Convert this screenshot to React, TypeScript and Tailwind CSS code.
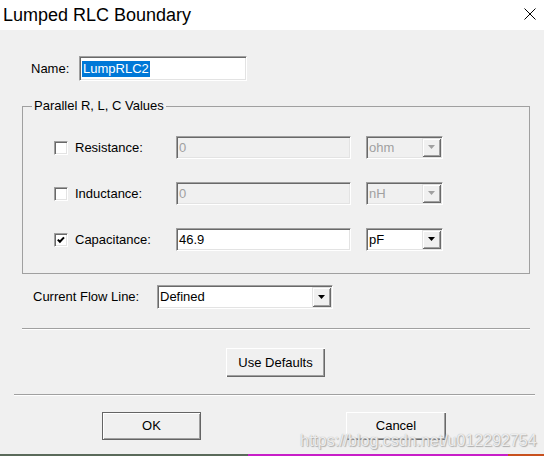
import React from "react";

const font = { fontFamily: '"Liberation Sans", Arial, sans-serif' };

const sunken =
  "border border-t-[#a0a0a0] border-l-[#a0a0a0] border-r-white border-b-white shadow-[inset_1px_1px_0_#696969,inset_-1px_-1px_0_#e3e3e3]";

function Arrow({ disabled }: { disabled?: boolean }) {
  return (
    <div className="w-[19px] h-full bg-[#f0f0f0] shadow-[inset_1px_1px_0_#e3e3e3,inset_-1px_-1px_0_#696969,inset_2px_2px_0_#fff,inset_-2px_-2px_0_#a0a0a0] flex items-center justify-center shrink-0">
      <svg width="8" height="5" viewBox="0 0 8 5">
        <path d="M0 0H7L3.5 4Z" fill={disabled ? "#a0a0a0" : "#000"} />
      </svg>
    </div>
  );
}

function Combo({ text, disabled, w }: { text: string; disabled?: boolean; w: string }) {
  return (
    <div className={`${w} ${sunken} ${disabled ? "bg-[#f0f0f0]" : "bg-white"} flex items-stretch p-[1px]`}>
      <div className={`flex-1 pl-[1px] text-[13px] leading-[20px] ${disabled ? "text-[#a0a0a0]" : "text-black"}`}>
        {text}
      </div>
      <Arrow disabled={disabled} />
    </div>
  );
}

function Check({ checked }: { checked?: boolean }) {
  return (
    <div className="w-[14px] h-[14px] bg-white border border-t-[#a0a0a0] border-l-[#a0a0a0] border-r-white border-b-white shadow-[inset_1px_1px_0_#696969,inset_-1px_-1px_0_#e3e3e3] flex items-center justify-center shrink-0">
      {checked && (
        <svg width="8" height="8" viewBox="0 0 8 8">
          <path d="M0.8 3.6L2.9 5.8L7 1.4" stroke="#000" strokeWidth="2" fill="none" />
        </svg>
      )}
    </div>
  );
}

function Row({ label, value, unit, checked }: { label: string; value: string; unit: string; checked?: boolean }) {
  const disabled = !checked;
  return (
    <div className="flex items-center h-[23px]">
      <Check checked={checked} />
      <div className="ml-[7px] w-[101px] text-[13px] text-black">{label}</div>
      <div className={`w-[175px] h-[23px] ${sunken} ${disabled ? "bg-[#f0f0f0] text-[#a0a0a0]" : "bg-white text-black"} pl-[2px] text-[13px] leading-[21px]`}>
        {value}
      </div>
      <div className="ml-[15px] flex">
        <Combo text={unit} disabled={disabled} w="w-[77px] h-[23px]" />
      </div>
    </div>
  );
}

function Button({ label, def, w }: { label: string; def?: boolean; w: string }) {
  return (
    <div
      className={`${w} flex items-center justify-center text-[13px] text-black bg-[#f0f0f0] ${
        def
          ? "border border-[#646464] shadow-[inset_1px_1px_0_#fff,inset_-1px_-1px_0_#a0a0a0]"
          : "shadow-[inset_1px_1px_0_#fff,inset_-1px_-1px_0_#696969,inset_-2px_-2px_0_#a0a0a0]"
      }`}
    >
      {label}
    </div>
  );
}

export default function App() {
  return (
    <div className="w-[544px] h-[456px] flex flex-col bg-[#f0f0f0] relative overflow-hidden" style={font}>
      <div className="h-[30px] bg-white flex items-center justify-between shrink-0">
        <div className="pl-[3px] text-[18px] text-black">Lumped RLC Boundary</div>
        <svg width="12" height="12" viewBox="0 0 12 12" className="mr-[8px] mb-[3px]">
          <path d="M0.5 0.5L11.5 11.5M11.5 0.5L0.5 11.5" stroke="#000" strokeWidth="1" />
        </svg>
      </div>

      <div className="flex-1 flex flex-col">
        <div className="flex items-center mt-[26px] h-[25px] pl-[31px]">
          <div className="w-[48px] shrink-0 text-[13px] text-black">Name:</div>
          <div className={`w-[168px] h-[25px] shrink-0 bg-white ${sunken} pl-[2px] flex items-center`}>
            <span className="bg-[#0078d7] text-white text-[13px] leading-[16px] px-[1px]">LumpRLC2</span>
          </div>
        </div>

        <div className="relative mt-[25px] ml-[22px] w-[508px] border border-[#a0a0a0] pt-[29px] pb-[22px] pl-[31px] flex flex-col gap-[23px]">
          <div className="absolute -top-[9px] left-[9px] bg-[#f0f0f0] px-[2px] text-[13px] leading-[16px] text-black">
            Parallel R, L, C Values
          </div>
          <Row label="Resistance:" value="0" unit="ohm" />
          <Row label="Inductance:" value="0" unit="nH" />
          <Row label="Capacitance:" value="46.9" unit="pF" checked />
        </div>

        <div className="flex items-center mt-[11px] h-[24px] pl-[33px]">
          <div className="w-[124px] shrink-0 text-[13px] text-black">Current Flow Line:</div>
          <Combo text="Defined" w="w-[176px] h-[24px]" />
        </div>

        <div className="mt-[19px] ml-[22px] w-[508px] h-[2px] border-t border-t-[#a0a0a0] border-b border-b-white" />

        <div className="mt-[18px] pl-[226px] flex">
          <Button label="Use Defaults" w="w-[99px] h-[29px]" />
        </div>

        <div className="mt-[17px] ml-[14px] w-[521px] h-[2px] border-t border-t-[#a0a0a0] border-b border-b-white" />

        <div className="mt-[16px] flex pl-[102px]">
          <Button label="OK" def w="w-[99px] h-[28px]" />
          <div className="ml-[145px]">
            <Button label="Cancel" w="w-[100px] h-[28px]" />
          </div>
        </div>
      </div>

      <div className="h-[2px] flex shrink-0">
        <div className="w-[248px] bg-[#5a6a5a]" />
        <div className="flex-1 bg-[#c81ec8]" />
        <div className="w-[36px] bg-[#c8501e]" />
      </div>

      <div className="absolute left-[300px] top-[429px] text-[16px] text-white/80 [text-shadow:0_0_1px_#9a9a9a,1px_1px_1px_#b0b0b0]">
        https://blog.csdn.net/u012292754
      </div>
    </div>
  );
}
